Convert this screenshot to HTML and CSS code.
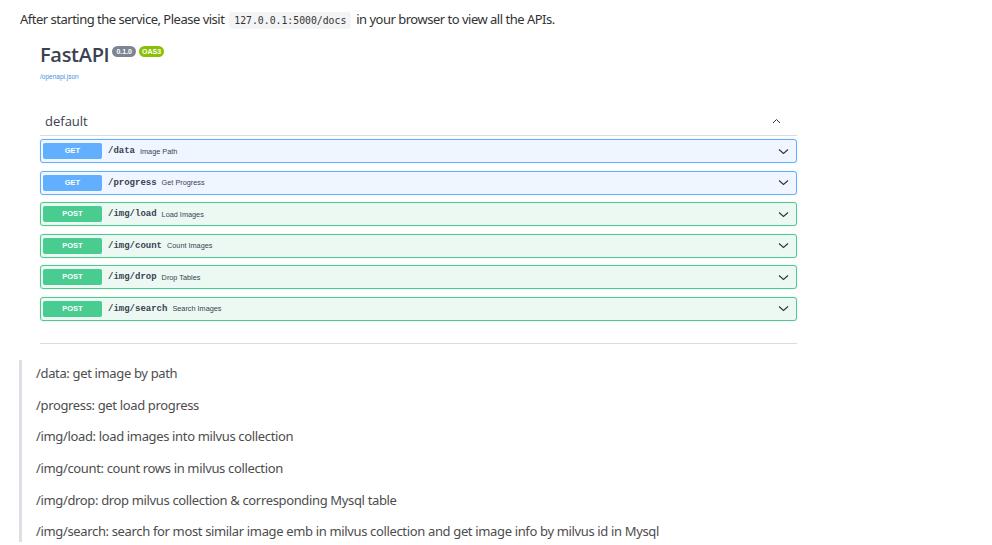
FILE: index.html
```html
<!DOCTYPE html>
<html>
<head>
<meta charset="utf-8">
<link rel="stylesheet" href="styles.css">
</head>
<body>
<p class="intro">After starting the service, Please visit <code>127.0.0.1:5000/docs</code> in your browser to view all the APIs.</p>
<div class="swagger">
  <div class="title">
    <span class="name">FastAPI</span>
    <span class="badge ver">0.1.0</span>
    <span class="badge oas">OAS3</span>
  </div>
  <a class="link">/openapi.json</a>
  <div class="tag">
    <span class="tag-name">default</span>
    <svg class="chev-up" width="9" height="6" viewBox="0 0 9 6"><path d="M1 5 L4.5 1.5 L8 5" fill="none" stroke="#333" stroke-width="1"/></svg>
  </div>
  <div class="ops">
    <div class="op get"><span class="method">GET</span><span class="path">/data</span><span class="sum">Image Path</span><svg class="chev" width="11" height="7" viewBox="0 0 11 7"><path d="M1 1.5 L5.5 5.5 L10 1.5" fill="none" stroke="#333" stroke-width="1.1"/></svg></div>
    <div class="op get"><span class="method">GET</span><span class="path">/progress</span><span class="sum">Get Progress</span><svg class="chev" width="11" height="7" viewBox="0 0 11 7"><path d="M1 1.5 L5.5 5.5 L10 1.5" fill="none" stroke="#333" stroke-width="1.1"/></svg></div>
    <div class="op post"><span class="method">POST</span><span class="path">/img/load</span><span class="sum">Load Images</span><svg class="chev" width="11" height="7" viewBox="0 0 11 7"><path d="M1 1.5 L5.5 5.5 L10 1.5" fill="none" stroke="#333" stroke-width="1.1"/></svg></div>
    <div class="op post"><span class="method">POST</span><span class="path">/img/count</span><span class="sum">Count Images</span><svg class="chev" width="11" height="7" viewBox="0 0 11 7"><path d="M1 1.5 L5.5 5.5 L10 1.5" fill="none" stroke="#333" stroke-width="1.1"/></svg></div>
    <div class="op post"><span class="method">POST</span><span class="path">/img/drop</span><span class="sum">Drop Tables</span><svg class="chev" width="11" height="7" viewBox="0 0 11 7"><path d="M1 1.5 L5.5 5.5 L10 1.5" fill="none" stroke="#333" stroke-width="1.1"/></svg></div>
    <div class="op post"><span class="method">POST</span><span class="path">/img/search</span><span class="sum">Search Images</span><svg class="chev" width="11" height="7" viewBox="0 0 11 7"><path d="M1 1.5 L5.5 5.5 L10 1.5" fill="none" stroke="#333" stroke-width="1.1"/></svg></div>
  </div>
  <div class="bottom-line"></div>
</div>
<blockquote class="notes">
  <p>/data: get image by path</p>
  <p>/progress: get load progress</p>
  <p>/img/load: load images into milvus collection</p>
  <p>/img/count: count rows in milvus collection</p>
  <p>/img/drop: drop milvus collection &amp; corresponding Mysql table</p>
  <p>/img/search: search for most similar image emb in milvus collection and get image info by milvus id in Mysql</p>
</blockquote>
</body>
</html>
```
FILE: styles.css
```css
html, body {
  margin: 0;
  padding: 0;
  background: #fff;
}
body {
  font-family: "Noto Sans", "Liberation Sans", sans-serif;
  overflow: hidden;
}
.intro {
  margin: 0;
  padding: 8px 0 0 20px;
  font-size: 13px;
  line-height: 22px;
  color: #333;
  letter-spacing: -0.5px;
}
.intro code {
  font-family: "DejaVu Sans Mono", "Liberation Mono", monospace;
  font-size: 9.8px;
  background: #f3f4f5;
  padding: 3px 5px;
  border-radius: 3px;
  color: #333;
  margin: 0 2px;
  letter-spacing: 0;
}
.swagger {
  margin: 11px 0 0 40px;
  width: 757px;
  font-family: "Liberation Sans", sans-serif;
  color: #3b4151;
}
.title {
  display: flex;
  align-items: flex-start;
  height: 24px;
}
.name {
  font-size: 20px;
  line-height: 24px;
  font-weight: 600;
  font-family: "Open Sans", "Liberation Sans", sans-serif;
  letter-spacing: -0.3px;
}
.badge {
  margin-top: 3px;
  height: 11px;
  line-height: 11px;
  border-radius: 6px;
  color: #fff;
  font-size: 7px;
  font-weight: 700;
  padding: 0 4px;
  white-space: nowrap;
}
.ver {
  background: #7d8492;
  margin-left: 3px;
}
.oas {
  background: #89bf04;
  margin-left: 3px;
  padding: 0 3px;
}
.link {
  display: block;
  margin-top: 6px;
  font-size: 6.5px;
  line-height: 8px;
  color: #4990e2;
}
.tag {
  margin-top: 25px;
  height: 29px;
  border-bottom: 1px solid #d9dbdf;
  display: flex;
  align-items: center;
  justify-content: space-between;
  padding: 0 16px 0 5px;
}
.tag-name {
  font-size: 13px;
  font-family: "Open Sans", "Liberation Sans", sans-serif;
  color: #3b4151;
  font-weight: 500;
}
.chev-up {
  margin-top: 1px;
}
.ops {
  margin-top: 3px;
  display: flex;
  flex-direction: column;
  gap: 7.6px;
}
.op {
  height: 24px;
  box-sizing: border-box;
  border: 1px solid;
  border-radius: 3px;
  display: flex;
  align-items: center;
  padding: 0 7px 0 2px;
  box-shadow: 0 0 2px rgba(0,0,0,0.12);
}
.op.get {
  background: #eff6ff;
  border-color: #61affe;
}
.op.post {
  background: #ecf9f3;
  border-color: #49cc90;
}
.method {
  width: 59px;
  height: 16px;
  line-height: 16px;
  border-radius: 2px;
  color: #fff;
  font-size: 7.5px;
  font-weight: 700;
  text-align: center;
  flex: none;
}
.get .method { background: #61affe; }
.post .method { background: #49cc90; }
.path {
  margin-left: 6px;
  font-family: "Liberation Mono", monospace;
  font-weight: 700;
  font-size: 9px;
  color: #3b4151;
}
.sum {
  margin-left: 5px;
  font-size: 7.3px;
  color: #3b4151;
  flex: 1;
}
.bottom-line {
  margin-top: 22px;
  height: 1px;
  background: #d9dbdf;
}
.notes {
  margin: 16px 0 0 19px;
  padding: 2px 0 0 14px;
  border-left: 3px solid #dcdfe3;
  font-family: "Noto Sans", "Liberation Sans", sans-serif;
  color: #4d4d4d;
  font-size: 13px;
  letter-spacing: -0.35px;
}
.notes p {
  margin: 0 0 9.7px;
  line-height: 22px;
}
```
